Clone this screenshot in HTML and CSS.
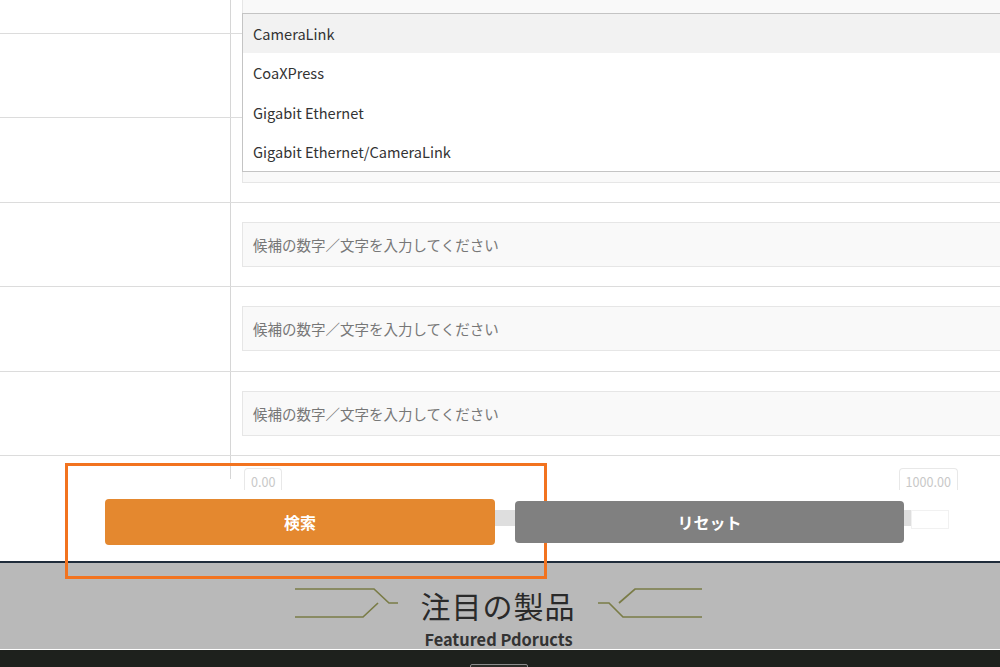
FILE: index.html
```html
<!DOCTYPE html>
<html lang="ja">
<head>
  <meta charset="UTF-8">
  <meta name="viewport" content="width=device-width, initial-scale=1.0">
  <title>製品検索</title>

  <link rel="stylesheet" href="styles.css">
</head>
<body>
  <div class="page">
    <div class="search">
      <div class="row row-top">
        <div class="label"></div>
        <div class="field"><div class="input input-cut"></div></div>
      </div>
      <div class="row">
        <div class="label"></div>
        <div class="field"><div class="input"></div></div>
      </div>
      <div class="row">
        <div class="label"></div>
        <div class="field"><div class="input"></div></div>
      </div>
      <div class="row">
        <div class="label"></div>
        <div class="field"><div class="input">候補の数字／文字を入力してください</div></div>
      </div>
      <div class="row">
        <div class="label"></div>
        <div class="field"><div class="input">候補の数字／文字を入力してください</div></div>
      </div>
      <div class="row">
        <div class="label"></div>
        <div class="field"><div class="input">候補の数字／文字を入力してください</div></div>
      </div>

      <div class="range-row">
        <div class="range-head">
          <div class="label label-short"></div>
          <div class="range-labels">
            <span class="tip">0.00</span>
            <span class="tip">1000.00</span>
          </div>
        </div>
        <div class="buttons">
          <button class="btn btn-search">検索</button>
          <button class="btn btn-reset">リセット</button>
        </div>
      </div>

      <ul class="dropdown">
        <li class="active">CameraLink</li>
        <li>CoaXPress</li>
        <li>Gigabit Ethernet</li>
        <li>Gigabit Ethernet/CameraLink</li>
      </ul>
    </div>

    <div class="featured">
      <div class="featured-title">
        <svg class="deco" width="104" height="34" viewBox="0 0 104 34">
          <polyline points="0,3 79,3 94,17 103,17" />
          <polyline points="0,31 68,31 83,17" />
        </svg>
        <h2>注目の製品</h2>
        <svg class="deco" width="104" height="34" viewBox="0 0 104 34">
          <polyline points="0,17 11,17 25,31 104,31" />
          <polyline points="21,17 37,3 104,3" />
        </svg>
      </div>
      <p class="featured-sub">Featured Pdoructs</p>
    </div>

    <div class="strip"><span class="strip-tab"></span></div>

    <div class="callout"></div>
  </div>
</body>
</html>
```

FILE: styles.css
```css
html, body {
  margin: 0;
  padding: 0;
  overflow: hidden;
}

body {
  font-family: "Noto Sans CJK JP", "Noto Sans", sans-serif;
  color: #333;
  background: #fff;
}

.page {
  position: relative;
  width: 1000px;
  height: 667px;
  overflow: hidden;
}

.search {
  position: relative;
  border-bottom: 2px solid #1f2c3b;
}

.row {
  display: flex;
  height: 84.4px;
  box-sizing: border-box;
  border-bottom: 1px solid #dcdcdc;
}

.row-top {
  height: 34px;
}

.label {
  width: 230px;
  flex-shrink: 0;
  border-right: 1px solid #d6d6d6;
}

.field {
  flex: 1;
  display: flex;
  align-items: center;
  padding-left: 11px;
}

.input {
  flex: 1;
  height: 45px;
  margin-right: -20px;
  box-sizing: border-box;
  background: #f9f9f9;
  border: 1px solid #e6e6e6;
  padding-left: 10px;
  display: flex;
  align-items: center;
  font-size: 14.5px;
  color: #777;
}

.input-cut {
  align-self: flex-start;
  height: 14px;
  border-top: none;
}

/* dropdown list of the open select */
.dropdown {
  position: absolute;
  top: 13px;
  left: 242px;
  right: -20px;
  margin: 0;
  padding: 0;
  list-style: none;
  background: #fff;
  border: 1px solid #c4c4c4;
  border-right: none;
}

.dropdown li {
  height: 39.25px;
  line-height: 39.25px;
  padding-left: 10px;
  font-size: 14.6px;
  color: #333;
}

.dropdown .active {
  background: #f2f2f2;
}

/* range + buttons */
.range-row {
  position: relative;
  height: 105px;
}

.range-row::before {
  content: "";
  position: absolute;
  top: 54px;
  left: 300px;
  width: 611px;
  height: 16px;
  background: #dedede;
}

.range-row::after {
  content: "";
  position: absolute;
  top: 54px;
  left: 911px;
  width: 36px;
  height: 17px;
  background: #fff;
  border: 1px solid #f1f1f1;
}

.range-head {
  display: flex;
  align-items: flex-start;
}

.label-short {
  height: 23px;
}

.range-labels {
  flex: 1;
  display: flex;
  justify-content: space-between;
  padding: 12px 42px 0 13px;
}

.tip {
  height: 22px;
  box-sizing: border-box;
  padding: 3px 6px 0;
  border: 1px solid #e8e8e8;
  border-bottom: none;
  border-radius: 4px 4px 0 0;
  font-size: 12.6px;
  line-height: 20px;
  color: #c8c8c8;
}

.buttons {
  position: relative;
  z-index: 1;
  display: flex;
  align-items: center;
  gap: 20px;
  height: 46px;
  margin-top: 9px;
  padding-left: 105px;
}

.btn {
  border: none;
  border-radius: 4px;
  color: #fff;
  font-family: inherit;
  font-size: 16px;
  font-weight: bold;
}

.btn-search {
  width: 390px;
  height: 46px;
  background: #e4882f;
}

.btn-reset {
  width: 389px;
  height: 42px;
  background: #808080;
}

/* featured products heading */
.featured {
  height: 87px;
  box-sizing: border-box;
  padding-top: 22px;
  background: #b9b9b9;
  border-bottom: 1px solid #fff;
  text-align: center;
}

.featured-title {
  display: flex;
  justify-content: center;
  align-items: center;
  gap: 22px;
  padding-right: 4px;
}

.featured-title h2 {
  margin: 0;
  font-size: 30px;
  font-weight: normal;
  line-height: 40px;
  letter-spacing: 1px;
  color: #2a2a2a;
}

.deco {
  margin-top: -4px;
}

.deco polyline {
  fill: none;
  stroke: #7a7c47;
  stroke-width: 1.7;
}

.featured-sub {
  margin: 4px 0 0;
  padding-right: 3px;
  font-size: 16.4px;
  font-weight: bold;
  line-height: 20px;
  color: #333;
}

.strip {
  height: 20px;
  box-sizing: border-box;
  padding: 14px 0 0 470px;
  background: #1e211d;
}

.strip-tab {
  display: block;
  width: 56px;
  height: 8px;
  border: 1px solid #8c8c8c;
  border-radius: 2px 2px 0 0;
  background: #2a2c28;
}

/* highlight frame drawn over the buttons */
.callout {
  position: absolute;
  top: 463px;
  left: 65px;
  width: 482px;
  height: 116px;
  box-sizing: border-box;
  border: 3px solid #f2731f;
  pointer-events: none;
}
```
